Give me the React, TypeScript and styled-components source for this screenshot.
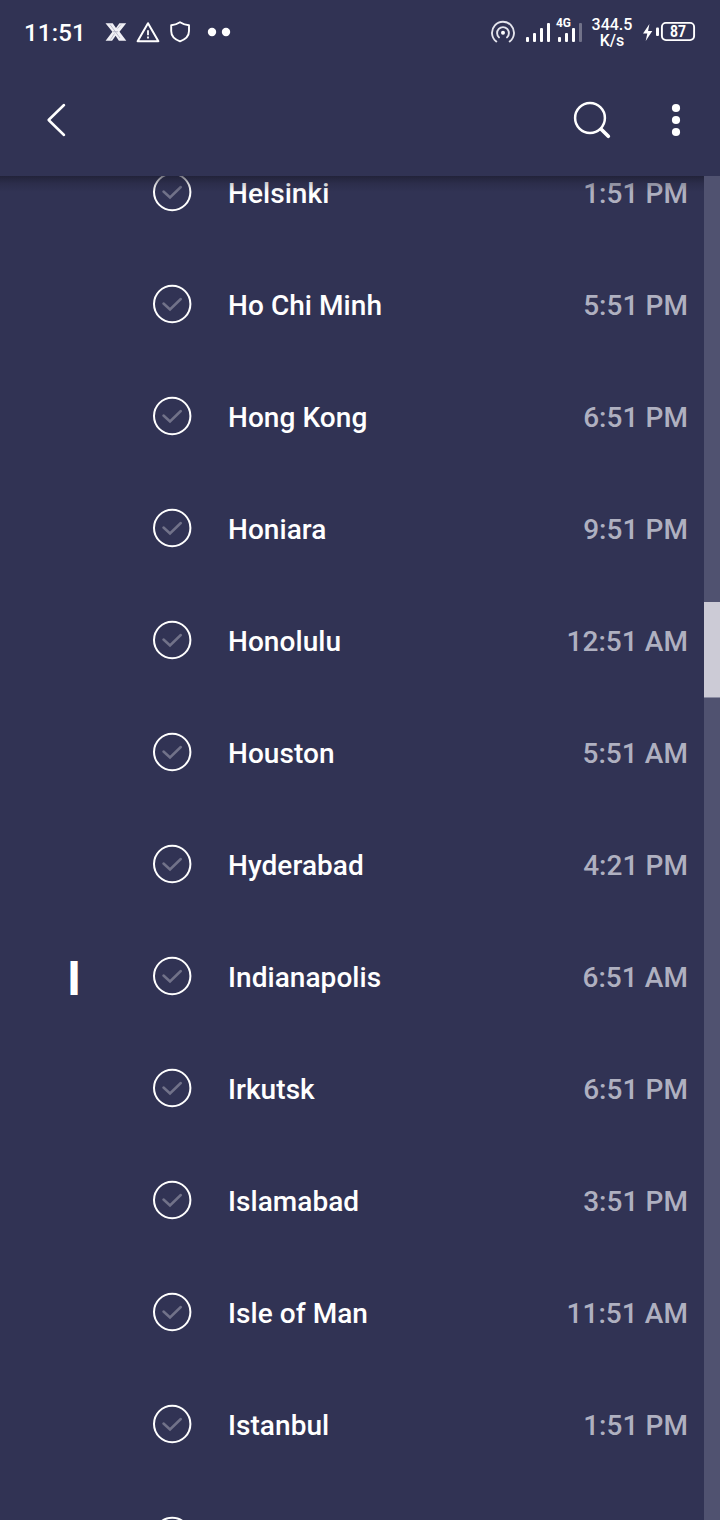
import React from "react";
import styled, { createGlobalStyle } from "styled-components";

const GlobalStyle = createGlobalStyle`
  *, *::before, *::after { box-sizing: border-box; }
  html, body { margin: 0; padding: 0; background: #313354; }
  body { font-family: Roboto, "Liberation Sans", sans-serif; color: #fff; }
  svg { display: block; flex: none; }
`;

const Screen = styled.div`
  display: flex;
  flex-direction: column;
  width: 720px;
  height: 1520px;
  overflow: hidden;
  background: #313354;
`;

const StatusBar = styled.header`
  display: flex;
  flex: none;
  align-items: center;
  justify-content: space-between;
  height: 64px;
  padding: 0 24px 0 24px;
`;

const StatusGroup = styled.div`
  display: flex;
  align-items: center;
`;

const SignalGroup = styled.div`
  display: flex;
  gap: 10px;
`;

const Clock = styled.span`
  width: 80px;
  padding-top: 1px;
  font-size: 24px;
  font-weight: 500;
  line-height: 28px;
  letter-spacing: 0.2px;
`;

const NetSpeed = styled.span`
  width: 50px;
  margin: 0 5px 0 4px;
  padding-top: 2px;
  text-align: center;
  font-size: 16px;
  font-weight: 500;
  line-height: 16px;
`;

const Toolbar = styled.nav`
  display: flex;
  flex: none;
  align-items: center;
  height: 112px;
  padding: 0 24px 0 36px;
`;

const IconButton = styled.button<{ $push?: boolean; $gap?: number }>`
  display: grid;
  place-items: center;
  width: 40px;
  height: 40px;
  margin-left: ${(p) => (p.$push ? "auto" : `${p.$gap ?? 0}px`)};
  padding: 0;
  border: 0;
  background: none;
  color: inherit;
`;

const Viewport = styled.main`
  position: relative;
  display: grid;
  grid-template-columns: 1fr 16px;
  flex: 1;
  min-height: 0;
  overflow: hidden;

  &::before {
    content: "";
    position: absolute;
    inset: 0 16px auto 0;
    height: 16px;
    background: linear-gradient(rgba(24, 24, 40, 0.6), rgba(24, 24, 40, 0.22) 45%, rgba(24, 24, 40, 0));
  }
`;

const CityList = styled.ul`
  margin: -40px 0 0;
  padding: 0;
  list-style: none;
`;

const CityRow = styled.li`
  display: grid;
  grid-template-columns: 152px 76px 1fr auto;
  align-items: center;
  height: 112px;
  padding-right: 16px;
`;

const SectionLetter = styled.span`
  padding: 6px 4px 0 0;
  text-align: center;
  font-size: 48px;
  font-weight: 700;
  line-height: 56px;
`;

const CityName = styled.span`
  padding-top: 4px;
  font-size: 28px;
  font-weight: 500;
  line-height: 34px;
  letter-spacing: 0.06px;
`;

const CityTime = styled(CityName)`
  color: #afb0c0;
`;

const ScrollTrack = styled.div`
  padding-top: 426px;
  background: #505270;
`;

const ScrollThumb = styled.div`
  height: 96px;
  background: #cccbd6;
  border-bottom: 1px solid #8b8ca2;
`;

const CheckCircle = () => (
  <svg width="40" height="40" viewBox="0 0 40 40" fill="none">
    <circle cx="20.2" cy="20" r="18.2" stroke="#fff" strokeWidth="2" />
    <path d="M11.5 19.5 18 25.5 28.8 15" stroke="#717289" strokeWidth="2.5" strokeLinecap="round" />
  </svg>
);

type City = { name: string; time: string; letter?: string };

const cities: City[] = [
  { name: "Helsinki", time: "1:51 PM" },
  { name: "Ho Chi Minh", time: "5:51 PM" },
  { name: "Hong Kong", time: "6:51 PM" },
  { name: "Honiara", time: "9:51 PM" },
  { name: "Honolulu", time: "12:51 AM" },
  { name: "Houston", time: "5:51 AM" },
  { name: "Hyderabad", time: "4:21 PM" },
  { name: "Indianapolis", time: "6:51 AM", letter: "I" },
  { name: "Irkutsk", time: "6:51 PM" },
  { name: "Islamabad", time: "3:51 PM" },
  { name: "Isle of Man", time: "11:51 AM" },
  { name: "Istanbul", time: "1:51 PM" },
  { name: "", time: "" },
];

const NotificationIcons = () => (
  <svg width="130" height="32" viewBox="104 16 130 32" fill="none">
    <path d="M105.5 23.2h7.2l3.3 4.7 3.4-4.7h6.8l-6.7 8.5 6.8 9.1h-7.4l-3.3-5-3.5 5h-6.5l6.8-9z" fill="#f0f0f5" />
    <path d="m110 24.5 10 13.5M110.5 39.5l4-6M117.5 28.5l3.5-4M113 31.7h5" stroke="#a3a4b6" strokeWidth=".7" />
    <path d="M148 23.2 158.4 41.2H137.6Z" stroke="#fff" strokeWidth="2" strokeLinejoin="round" />
    <path d="M148 30.2v5M148 36.4v2.2" stroke="#fff" strokeWidth="1.8" />
    <path d="M180 22.2C177.2 24 174.2 25 171.2 25.2V31C171.2 36 174.3 39.3 180 41.3 185.7 39.3 189 36 189 31V25.2C185.8 25 182.8 24 180 22.2Z" stroke="#fff" strokeWidth="1.9" strokeLinejoin="round" />
    <circle cx="212" cy="32" r="4.2" fill="#fff" />
    <circle cx="226" cy="32" r="4.2" fill="#fff" />
  </svg>
);

const HotspotIcon = () => (
  <svg width="24" height="32" viewBox="491 16 24 32" fill="none" stroke="#e4e4ec" strokeWidth="1.9" strokeLinecap="round">
    <path d="M496.3 41.5A11 11 0 1 1 509.7 41.5" />
    <path d="M499 37.4A5.9 5.9 0 1 1 507 37.4" />
    <circle cx="503" cy="32.8" r="2" fill="#fff" stroke="none" />
  </svg>
);

const SignalIcons = () => (
  <svg width="58" height="32" viewBox="525 16 58 32" fill="#fff">
    <rect x="526" y="37" width="3" height="5" rx="1" />
    <rect x="533" y="33" width="3" height="9" rx="1" />
    <rect x="540" y="28" width="3" height="14" rx="1" />
    <rect x="547" y="23" width="3" height="19" rx="1" />
    <rect x="558" y="37" width="3" height="5" rx="1" />
    <rect x="565" y="33" width="3" height="9" rx="1" />
    <rect x="572" y="28" width="3" height="14" rx="1" />
    <rect x="579" y="23" width="3" height="19" rx="1" fill="#717289" />
    <text x="556" y="27" fontFamily="Roboto, sans-serif" fontSize="12" fontWeight="700" textLength="15" lengthAdjust="spacingAndGlyphs">4G</text>
  </svg>
);

const BatteryIcon = () => (
  <svg width="54" height="32" viewBox="642 16 54 32">
    <path d="M649.4 24 643 33.5h4.3L645.7 41 652.3 31h-4.2z" fill="#fff" />
    <rect x="656" y="27.5" width="3" height="8.5" rx="1" fill="#fff" />
    <rect x="661.9" y="22.9" width="32.2" height="17.2" rx="4" fill="none" stroke="#fff" strokeWidth="1.9" />
    <text x="678" y="37" textAnchor="middle" fill="#fff" fontFamily="Roboto, sans-serif" fontSize="16" fontWeight="700" textLength="16" lengthAdjust="spacingAndGlyphs">87</text>
  </svg>
);

export default function App() {
  return (
    <>
      <GlobalStyle />
      <Screen>
        <StatusBar>
          <StatusGroup>
            <Clock>11:51</Clock>
            <NotificationIcons />
          </StatusGroup>
          <StatusGroup>
            <SignalGroup>
              <HotspotIcon />
              <SignalIcons />
            </SignalGroup>
            <NetSpeed>344.5 K/s</NetSpeed>
            <BatteryIcon />
          </StatusGroup>
        </StatusBar>
        <Toolbar>
          <IconButton aria-label="Back">
            <svg width="40" height="40" viewBox="36 100 40 40" fill="none">
              <path d="M64 105 48.6 120 64 135" stroke="#fff" strokeWidth="2.5" strokeLinecap="round" strokeLinejoin="round" />
            </svg>
          </IconButton>
          <IconButton aria-label="Search" $push>
            <svg width="40" height="40" viewBox="572 100 40 40" fill="none" stroke="#fff">
              <circle cx="590" cy="118" r="14.9" strokeWidth="2.5" />
              <path d="M601.2 129.2 608.3 136.2" strokeWidth="3.7" strokeLinecap="round" />
            </svg>
          </IconButton>
          <IconButton aria-label="More options" $gap={44}>
            <svg width="40" height="40" viewBox="656 100 40 40" fill="#fff">
              <circle cx="676" cy="108" r="4.1" />
              <circle cx="676" cy="120" r="4.1" />
              <circle cx="676" cy="132" r="4.1" />
            </svg>
          </IconButton>
        </Toolbar>
        <Viewport>
          <CityList>
            {cities.map((city, i) => (
              <CityRow key={i}>
                <SectionLetter>{city.letter}</SectionLetter>
                <CheckCircle />
                <CityName>{city.name}</CityName>
                <CityTime>{city.time}</CityTime>
              </CityRow>
            ))}
          </CityList>
          <ScrollTrack>
            <ScrollThumb />
          </ScrollTrack>
        </Viewport>
      </Screen>
    </>
  );
}
